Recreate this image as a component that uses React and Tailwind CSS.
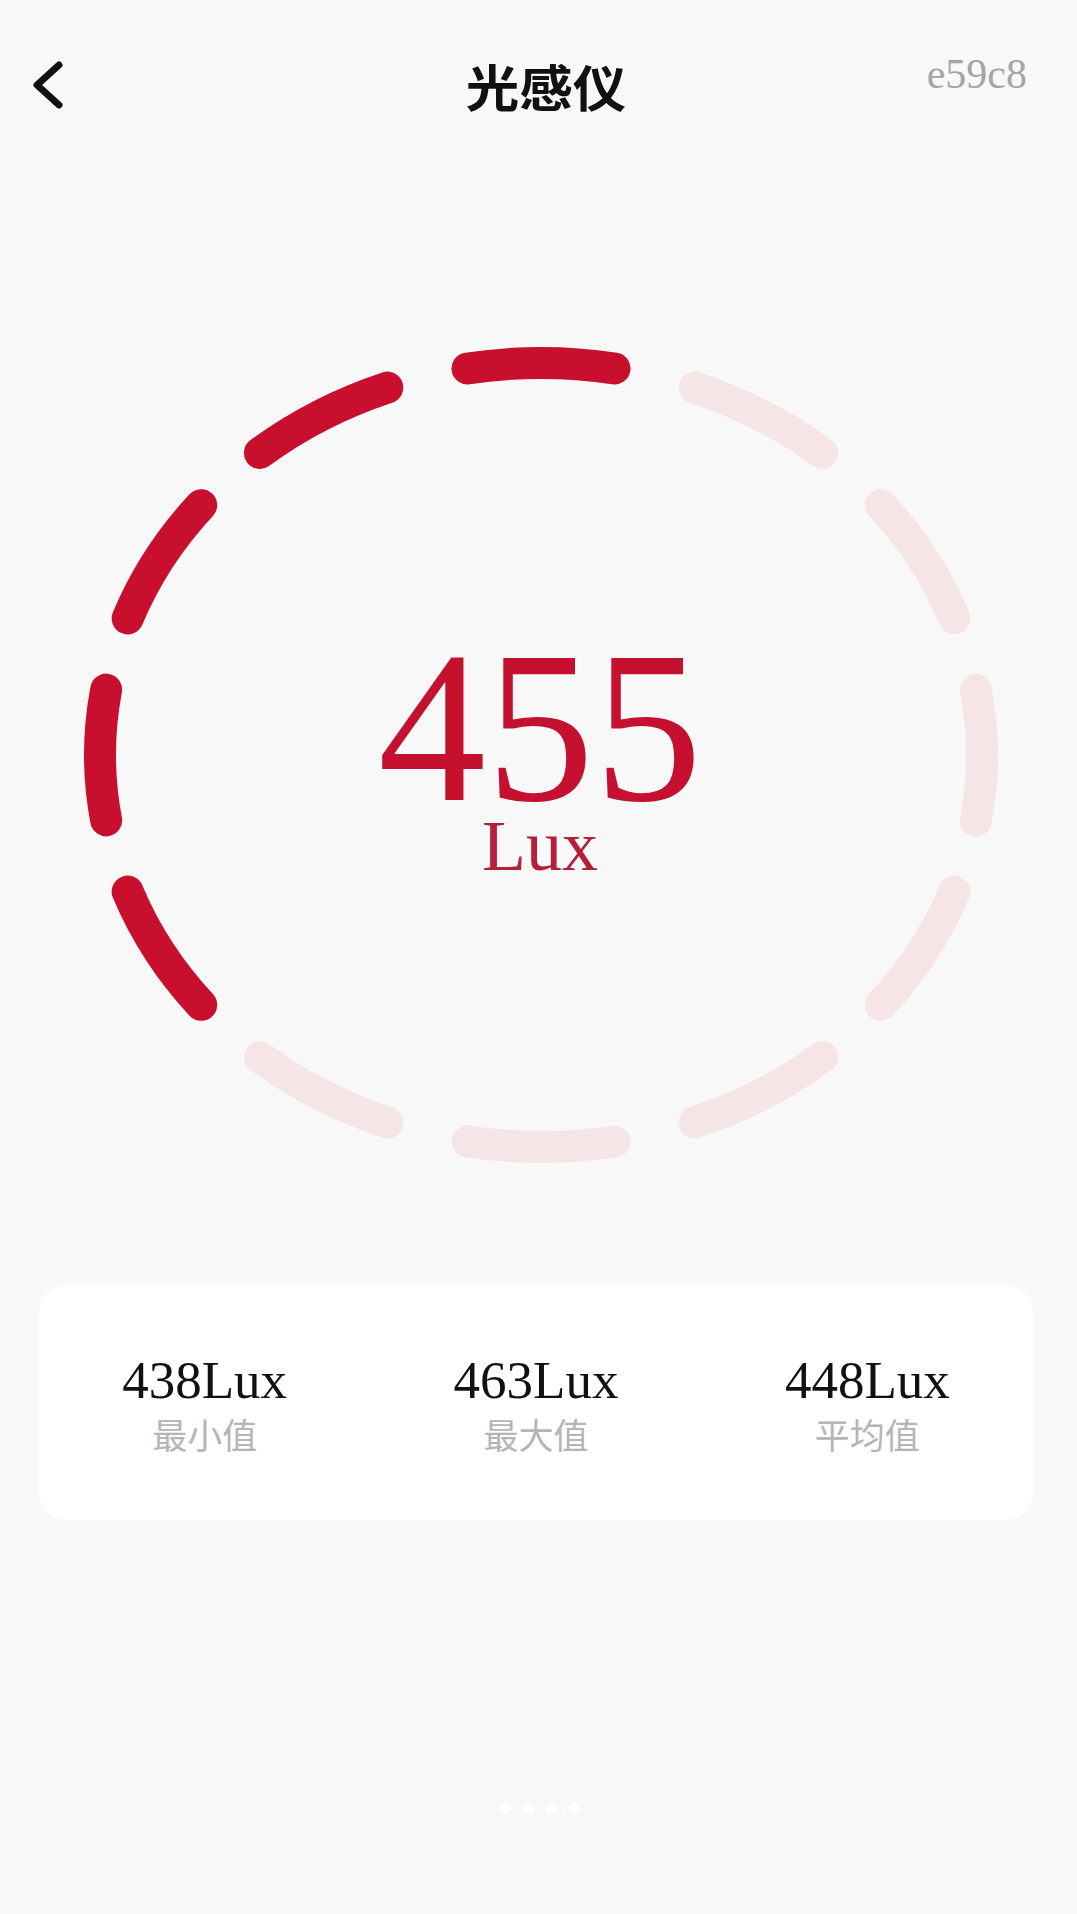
import React from "react";

const CX = 541;
const CY = 585;
const RX = 441;
const RY = 392;
const HALF = 9.6;

function pt(deg) {
  const t = (deg * Math.PI) / 180;
  return [CX + RX * Math.sin(t), CY - RY * Math.cos(t)];
}

function arc(center) {
  const [x1, y1] = pt(center - HALF);
  const [x2, y2] = pt(center + HALF);
  return `M ${x1.toFixed(2)} ${y1.toFixed(2)} A ${RX} ${RY} 0 0 1 ${x2.toFixed(2)} ${y2.toFixed(2)}`;
}

const RED = [0, 330, 300, 270, 240];
const LIGHT = [30, 60, 90, 120, 150, 180, 210];

function Gauge() {
  return (
    <div className="grid w-full">
      <svg
        className="[grid-area:1/1] block"
        width="1077"
        height="1115"
        viewBox="0 0 1077 1115"
      >
        {LIGHT.map((a) => (
          <path key={"l" + a} d={arc(a)} fill="none" stroke="#f6e5e7" strokeWidth="32" strokeLinecap="round" />
        ))}
        {RED.map((a) => (
          <path key={"r" + a} d={arc(a)} fill="none" stroke="#c8102e" strokeWidth="32" strokeLinecap="round" />
        ))}
      </svg>
      <div className="[grid-area:1/1] flex flex-col items-center pt-[473px] pl-[3px]">
        <div className="text-[216px] leading-[170px] text-[#c5102f] font-['Liberation_Serif',serif]">455</div>
        <div className="text-[72px] leading-[58px] mt-[4px] text-[#b41f3b] font-['Liberation_Serif',serif]">Lux</div>
      </div>
    </div>
  );
}

function Stat({ value, label }) {
  return (
    <div className="flex flex-col items-center">
      <div className="text-[53px] leading-none text-[#111] font-['Liberation_Serif',serif]">{value}</div>
      <div className="mt-[9px] text-[35px] leading-none text-[#b5b5b5] font-['Noto_Sans_CJK_SC',sans-serif]">{label}</div>
    </div>
  );
}

export default function App() {
  return (
    <div className="w-[1077px] min-h-[1914px] bg-[#f8f8f8] flex flex-col">
      <div className="h-[170px] grid grid-cols-[1fr_auto_1fr] items-center">
        <div className="pl-[29px] flex items-center">
          <svg width="36" height="48" viewBox="0 0 36 48">
            <polyline points="30,4 8,24 30,44" fill="none" stroke="#111" strokeWidth="7" strokeLinecap="round" strokeLinejoin="round" />
          </svg>
        </div>
        <div className="pl-[14px]">
          <div className="text-[50px] scale-x-[1.07] font-bold leading-none text-[#111] font-['Noto_Sans_CJK_SC',sans-serif]">光感仪</div>
        </div>
        <div className="flex justify-end pr-[50px] mt-[-22px]">
          <span className="text-[42px] leading-none text-[#a5a5a5] font-['Liberation_Serif',serif]">e59c8</span>
        </div>
      </div>
      <Gauge />
      <div className="ml-[39px] mr-[44px] h-[235px] bg-white rounded-[28px] grid grid-cols-3 items-center">
        <Stat value="438Lux" label="最小值" />
        <Stat value="463Lux" label="最大值" />
        <Stat value="448Lux" label="平均值" />
      </div>
      <div className="flex justify-center gap-[10px] mt-[282px] pl-[3px]">
        <span className="w-[13px] h-[13px] rounded-full bg-white shadow-[0_0_2px_rgba(0,0,0,0.06)]" />
        <span className="w-[13px] h-[13px] rounded-full bg-white shadow-[0_0_2px_rgba(0,0,0,0.06)]" />
        <span className="w-[13px] h-[13px] rounded-full bg-white shadow-[0_0_2px_rgba(0,0,0,0.06)]" />
        <span className="w-[13px] h-[13px] rounded-full bg-white shadow-[0_0_2px_rgba(0,0,0,0.08)]" />
      </div>
    </div>
  );
}
